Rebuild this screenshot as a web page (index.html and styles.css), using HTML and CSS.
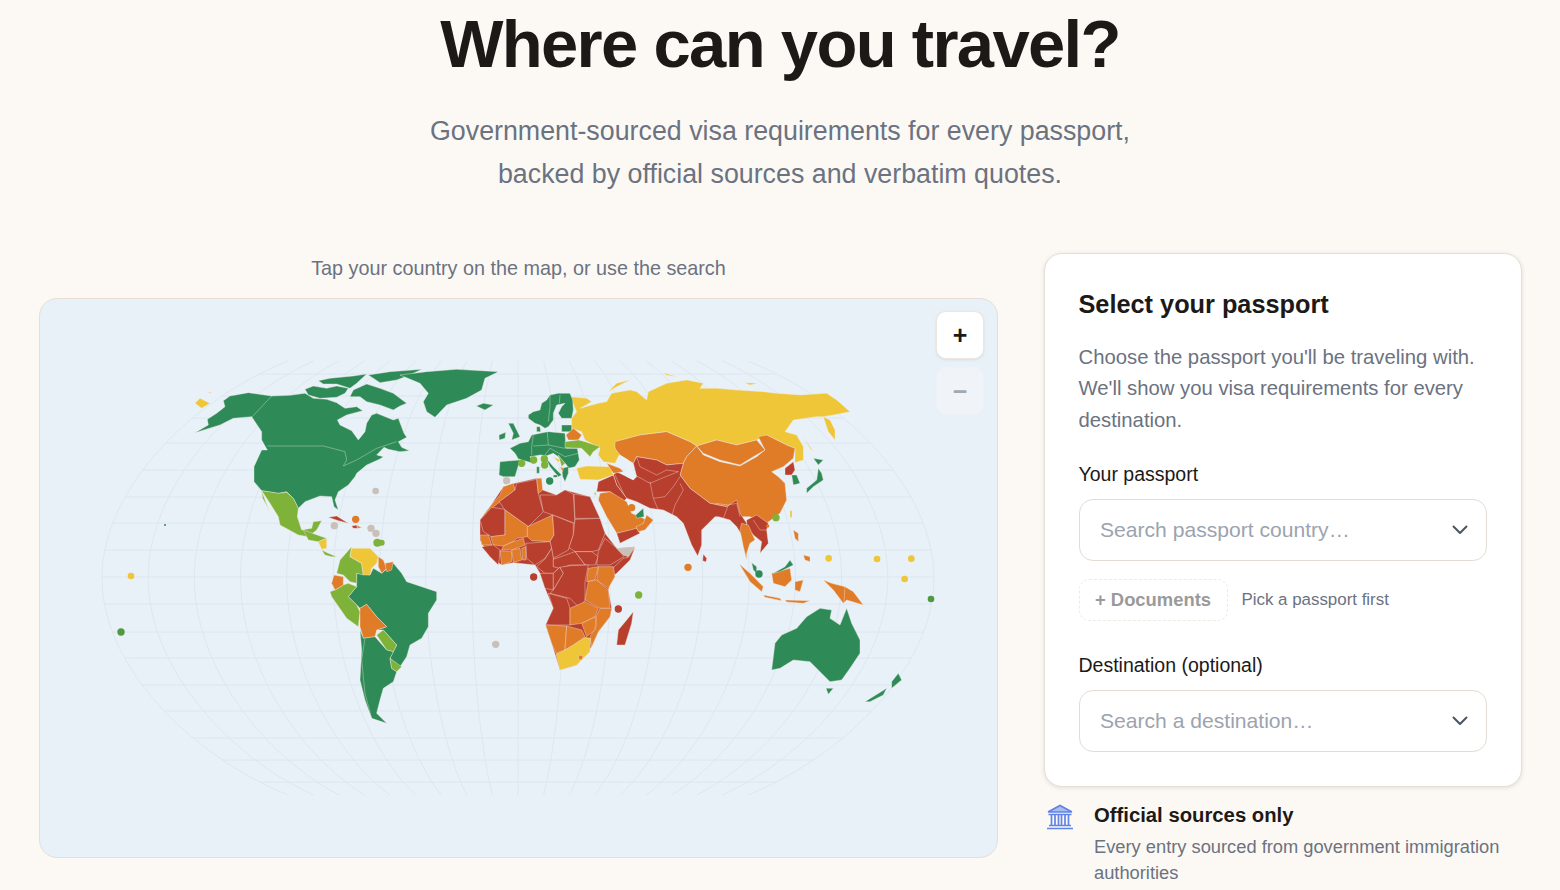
FILE: index.html
```html
<!DOCTYPE html>
<html lang="en">
<head>
<meta charset="utf-8">
<title>Where can you travel?</title>
<link rel="stylesheet" href="styles.css">
</head>
<body>
<header class="hero">
  <h1>Where can you travel?</h1>
  <p>Government-sourced visa requirements for every passport,<br>backed by official sources and verbatim quotes.</p>
</header>
<main class="layout">
  <section class="map-col">
    <div class="caption">Tap your country on the map, or use the search</div>
    <div class="map">
      <svg class="world" viewBox="39 298 959 560" aria-hidden="true">
        <defs>
          <path id="m" class="mer" d="M-230 361C-328 400-416 490-416 578C-416 666-328 755-230 795"/>
          <clipPath id="globe"><path d="M288 361H748C846 400 934 490 934 578C934 666 846 755 748 795H288C190 755 102 666 102 578C102 490 190 400 288 361Z"/></clipPath>
        </defs>
        <g class="grat" transform="translate(518 0)">
          <use href="#m" transform="scale(.111 1)"/><use href="#m" transform="scale(.222 1)"/><use href="#m" transform="scale(.333 1)"/><use href="#m" transform="scale(.444 1)"/><use href="#m" transform="scale(.556 1)"/><use href="#m" transform="scale(.667 1)"/><use href="#m" transform="scale(.778 1)"/><use href="#m" transform="scale(.889 1)"/><use href="#m" transform="scale(1 1)"/>
          <use href="#m" transform="scale(-.111 1)"/><use href="#m" transform="scale(-.222 1)"/><use href="#m" transform="scale(-.333 1)"/><use href="#m" transform="scale(-.444 1)"/><use href="#m" transform="scale(-.556 1)"/><use href="#m" transform="scale(-.667 1)"/><use href="#m" transform="scale(-.778 1)"/><use href="#m" transform="scale(-.889 1)"/><use href="#m" transform="scale(-1 1)"/>
          <path class="mer" d="M0 361V795"/>
        </g>
        <g class="grat" clip-path="url(#globe)">
          <path class="mer" d="M100 374H936M100 396H936M100 418H936M100 443H936M100 470H936M100 497H936M100 523H936M100 550H936M100 577H936M100 604H936M100 632H936M100 658H936M100 685H936M100 711H936M100 738H936M100 760H936M100 782H936"/>
        </g>

        <g class="land" transform="translate(180 360) scale(.33333)">
          <polygon class="g" points="45,218 85,195 82,178 110,160 135,140 130,122 150,108 205,98 275,108 330,106 375,100 400,115 440,118 470,128 495,145 530,140 548,152 500,165 472,180 480,195 515,212 535,240 555,215 560,190 575,165 590,160 640,180 655,175 672,220 680,232 655,245 665,262 688,272 660,275 625,268 612,262 590,285 610,290 600,297 560,315 530,340 525,350 505,375 475,395 465,420 475,450 462,440 455,410 420,408 375,425 355,445 340,415 320,395 295,400 245,392 222,365 222,320 245,270 262,270 245,240 245,215 215,170 160,175 120,195"/>
          <polyline class="b" points="275,108 215,172"/>
          <polyline class="b" points="262,258 430,258 495,275 500,300 490,318 530,300 590,265 650,245"/>
          <polygon class="g" points="375,88 400,78 440,85 470,78 505,85 495,100 470,112 420,115 385,105"/>
          <polygon class="g" points="415,62 450,55 520,48 560,42 530,70 510,85 470,72 430,72"/>
          <polygon class="g" points="520,90 560,72 600,85 640,100 680,130 660,138 640,150 600,135 560,125 540,110 510,110"/>
          <polygon class="g" points="565,45 630,35 725,28 690,45 650,60 600,68"/>
          <polygon class="g" points="660,45 740,35 830,28 955,35 915,55 905,90 860,115 800,135 765,172 740,155 730,125 745,100 720,70"/>
          <polygon class="g" points="889,138 910,130 940,135 915,150"/>
          <polygon class="y" points="45,130 60,115 90,130 65,145"/>
          <polygon class="y" points="84,97 94,96 90,100"/>
          <polygon class="l" points="245,392 265,395 295,400 320,397 340,415 355,445 352,470 365,510 395,505 400,485 425,482 410,510 385,530 355,525 300,495 295,470 270,430"/>
          <polygon class="l" points="245,392 255,420 272,465 262,440 248,415"/>
          <polygon class="l" points="370,510 420,528 440,535 415,545 385,540"/>
          <polygon class="y" points="415,545 440,535 440,565 425,568"/>
          <polygon class="l" points="425,570 445,580 470,590 455,590 435,585"/>
          <polygon class="r" points="445,472 470,468 505,490 475,482"/>
          <polygon class="r" points="515,498 530,495 533,505 520,505"/>
          <polygon class="o" points="530,495 545,503 533,505"/>
          <polygon class="g" points="530,640 570,645 580,625 605,640 640,610 665,640 680,665 770,695 770,720 745,760 745,800 725,835 690,855 680,890 660,920 630,895 650,855 610,810 590,810 620,800 590,770 560,733 540,745 530,735 505,710 530,680 530,670"/>
          <polygon class="l" points="470,640 480,600 515,560 510,590 545,610 550,645 530,640 530,670 510,665 490,645"/>
          <polygon class="y" points="515,565 570,565 595,590 590,610 575,625 570,645 550,645 545,610 510,590"/>
          <polygon class="o" points="595,590 610,600 620,625 605,640 595,620"/>
          <polygon class="o" points="615,610 640,605 635,630 620,635"/>
          <polygon class="l" points="465,690 490,675 505,670 530,680 505,710 530,735 540,755 535,800 500,775 455,710 450,695"/>
          <polygon class="o" points="462,645 490,650 490,675 465,690 455,670"/>
          <polygon class="o" points="540,745 560,733 590,770 620,800 590,810 585,830 550,835 540,800"/>
          <polygon class="l" points="590,825 610,810 650,855 640,875 620,870"/>
          <polygon class="g" points="540,810 550,835 585,830 620,870 640,875 630,895 635,925 650,935 640,965 610,985 600,1020 590,1060 620,1090 575,1075 555,1020 540,960 545,870"/>
          <polygon class="l" points="630,895 665,920 650,935 635,925"/>
          <polyline class="b" points="555,835 545,900 555,1000 575,1075"/>
          <circle class="n" cx="587" cy="393" r="10"/><circle class="o" cx="527" cy="478" r="11"/><circle class="n" cx="463" cy="497" r="11"/><circle class="n" cx="573" cy="505" r="11"/><circle class="n" cx="588" cy="520" r="11"/><circle class="l" cx="605" cy="548" r="9"/><circle class="l" cx="592" cy="548" r="12"/>
        </g>

        <g class="land" transform="translate(470 360) scale(.33333)">
          <polygon class="y" points="300,110 350,115 365,125 330,145 385,130 410,125 425,100 480,90 500,95 530,120 535,95 590,70 650,60 700,70 690,85 740,85 800,90 880,95 920,100 990,105 1070,100 1100,120 1140,155 1090,165 1060,170 1080,180 1095,210 1095,240 1075,215 1060,170 1040,170 970,180 945,215 980,225 1000,260 1000,300 975,308 975,265 950,255 890,225 860,240 800,255 740,240 680,258 660,245 590,215 510,225 440,245 435,265 450,280 435,310 400,305 385,285 390,265 345,240 335,215 305,205 305,175 320,155"/>
          <polygon class="y" points="415,95 440,70 480,60 440,80"/>
          <polygon class="y" points="580,38 620,50 590,46"/>
          <polygon class="y" points="825,68 862,70 840,75"/>
          <polygon class="y" points="1000,230 1030,275 1020,265"/>
          <polygon class="o" points="435,245 510,225 590,215 660,245 680,258 650,290 640,310 590,315 560,300 500,290 490,310 450,285 435,265"/>
          <polygon class="o" points="680,258 700,285 750,305 810,318 860,290 885,270 865,230 890,225 950,255 975,265 970,295 940,320 905,335 925,350 945,370 950,420 930,460 890,490 840,470 810,470 770,440 720,430 660,385 630,345 640,310 650,290"/>
          <polygon class="o" points="680,258 740,240 800,255 860,240 885,270 850,290 810,315 750,300 700,280"/>
          <polygon class="r" points="945,325 970,305 975,330 965,345 945,345"/>
          <polygon class="g" points="965,345 980,345 990,370 970,375"/>
          <polygon class="g" points="1010,385 1040,360 1045,325 1055,340 1060,360 1030,380 1010,400"/>
          <polygon class="g" points="1030,295 1060,300 1045,315"/>
          <polygon class="r" points="430,345 440,335 490,360 500,350 490,310 500,290 560,300 590,315 640,310 630,345 660,385 720,430 770,440 800,420 810,460 830,490 815,525 800,500 780,480 745,470 735,470 695,510 695,555 683,588 665,555 640,490 620,470 580,450 540,445 500,425 470,415 440,375"/>
          <polygon class="sea" points="450,285 475,300 490,340 490,360 470,350 465,320 445,300"/>
          <polyline class="b" points="540,365 550,415 565,450"/>
          <polyline class="b" points="540,370 575,355 625,335"/>
          <polyline class="b" points="550,415 585,410 610,380 630,350"/>
          <polyline class="b" points="630,370 640,390 615,435 605,470 635,485"/>
          <polyline class="b" points="495,345 540,370"/>
          <polyline class="b" points="500,290 510,320 560,345 590,330 625,335"/>
          <polyline class="b" points="735,430 775,435 760,475"/>
          <polyline class="b" points="775,435 800,430 810,470"/>
          <polyline class="b" points="435,345 465,410"/>
          <polygon class="r" points="830,480 860,465 895,490 890,510 895,550 870,580 875,545 850,525 830,500"/>
          <polyline class="b" points="850,480 870,510 890,510"/>
          <polygon class="o" points="815,490 835,495 855,540 840,550 830,580 830,600 820,560 810,510"/>
          <polygon class="r" points="700,582 710,595 708,606 698,602"/>
          <polygon class="r" points="380,395 385,365 430,345 440,375 470,415 460,425 420,395"/>
          <polygon class="o" points="390,400 420,395 470,425 485,460 510,470 530,480 505,505 440,520 410,470 385,420"/>
          <polygon class="r" points="440,520 500,505 510,520 450,550"/>
          <polygon class="o" points="530,465 550,480 525,510 505,515 498,500 520,490"/>
          <polygon class="g" points="497,465 520,445 522,470 500,475"/>
          <polygon class="y" points="320,325 350,318 420,320 430,345 385,360 330,358"/>
          <polygon class="o" points="410,310 450,325 460,335 430,340"/>

          <polygon class="g" points="175,165 190,155 210,150 215,130 230,120 240,105 265,100 300,100 308,120 310,150 305,175 275,175 265,160 275,140 285,130 260,135 250,160 250,180 235,200 225,205 210,195 195,190 175,175"/>
          <polyline class="b" points="240,105 240,140 235,185"/>
          <polyline class="b" points="270,105 268,130"/>
          <polygon class="g" points="275,195 305,195 305,215 275,215"/>
          <polygon class="g" points="115,190 130,190 150,230 125,240 130,220"/>
          <polygon class="g" points="87,225 107,217 105,235 88,240"/>
          <polygon class="g" points="200,200 210,200 212,215 200,215"/>
          <polygon class="g" points="120,265 150,250 175,245 185,225 225,217 235,215 285,220 288,265 322,265 328,300 315,320 295,325 290,315 275,300 265,290 250,280 230,287 210,285 180,290 190,310 145,297 135,280"/>
          <polyline class="b" points="190,225 185,260 185,285"/>
          <polyline class="b" points="232,217 235,255"/>
          <polyline class="b" points="190,258 235,255 285,265"/>
          <polyline class="b" points="225,285 240,265 285,290 325,280"/>
          <polygon class="g" points="90,305 150,300 135,350 100,350 87,345"/>
          <polygon class="g" points="225,290 250,320 275,345 265,350 240,320"/>
          <polygon class="g" points="200,320 208,320 208,340 200,340"/>
          <polygon class="g" points="250,345 262,345 262,352 250,352"/>
          <polygon class="g" points="275,325 295,320 295,340 285,365 278,350"/>
          <polygon class="y" points="250,290 270,300 265,307"/>
          <polygon class="l" points="265,285 285,310 275,320"/>
          <polygon class="o" points="270,320 280,325 278,335"/>
          <polygon class="o" points="288,225 310,205 335,225 325,240 295,240"/>
          <polygon class="l" points="285,245 325,240 345,245 390,260 370,275 360,290 335,265 285,263"/>
          <circle class="l" cx="155" cy="310" r="11"/><circle class="l" cx="191" cy="300" r="11"/><circle class="l" cx="223" cy="297" r="11"/><circle class="l" cx="224" cy="315" r="11"/><circle class="g" cx="239" cy="363" r="11"/><circle class="n" cx="110" cy="362" r="11"/>

          <polygon class="r" points="30,480 60,440 100,380 140,368 200,355 218,390 260,405 285,390 360,410 405,520 440,565 495,560 480,600 428,650 415,690 425,745 420,770 385,815 365,860 320,915 270,930 245,850 227,795 250,745 225,685 210,640 195,615 130,608 95,615 60,590 30,540"/>
          <polygon class="o" points="30,480 60,440 90,405 100,380 130,370 135,390 90,425 65,445 60,470"/>
          <polygon class="r" points="30,480 65,442 105,448 105,525 65,530 40,515"/>
          <polygon class="r" points="88,425 135,390 140,370 200,358 205,400 210,420 220,455 175,500 105,450"/>
          <polygon class="o" points="200,355 215,355 218,390 205,400"/>
          <polygon class="r" points="210,405 260,405 285,390 310,402 315,490 248,465 220,455"/>
          <polygon class="r" points="312,402 360,410 390,475 315,475"/>
          <polygon class="l" points="372,398 378,398 376,408"/>
          <polygon class="o" points="105,450 175,500 172,530 140,535 130,545 100,558 70,555 62,530 105,525"/>
          <polygon class="o" points="172,500 248,465 252,525 240,545 185,542 172,530"/>
          <polygon class="r" points="248,465 310,490 310,525 295,570 250,595 240,545 252,525"/>
          <polygon class="r" points="315,478 390,475 405,520 385,570 365,575 315,575 297,562 310,525"/>
          <polygon class="r" points="315,575 365,575 385,590 375,615 345,615"/>
          <polygon class="r" points="405,535 440,565 462,590 420,615 380,615 385,575"/>
          <polygon class="n" points="440,565 495,560 475,590 460,585"/>
          <polygon class="r" points="495,562 480,600 440,640 428,648 428,625 460,595 475,592"/>
          <polygon class="o" points="30,525 55,525 65,555 35,555"/>
          <polygon class="r" points="35,560 70,555 90,570 88,595 85,615 60,590"/>
          <polygon class="o" points="90,572 125,575 125,605 95,615"/>
          <polygon class="o" points="125,570 150,565 155,600 130,608"/>
          <polygon class="o" points="100,558 130,545 160,535 165,555 125,570 95,570"/>
          <polygon class="o" points="155,565 168,560 168,600 158,600"/>
          <polygon class="r" points="168,550 240,545 245,565 225,595 195,615 170,595"/>
          <polygon class="r" points="245,565 250,595 250,620 270,620 250,640 225,640 200,620 225,597"/>
          <polygon class="r" points="250,598 315,575 345,615 300,615 270,625 250,620"/>
          <polygon class="r" points="210,640 250,640 250,690 225,685"/>
          <polygon class="r" points="250,640 270,622 280,640 250,690"/>
          <polygon class="r" points="270,622 300,617 355,615 345,665 345,720 330,745 300,715 240,700 250,690 280,640"/>
          <polygon class="r" points="235,700 290,715 300,745 300,795 227,795 250,745"/>
          <polygon class="o" points="385,620 430,620 435,650 415,685 380,660"/>
          <polygon class="o" points="355,625 385,620 375,660 350,665"/>
          <polygon class="o" points="355,665 380,660 415,690 420,745 390,745 345,720"/>
          <polygon class="o" points="345,725 385,745 375,770 335,790 300,795 300,745"/>
          <polygon class="o" points="390,745 425,745 420,770 385,815 365,860 360,830 378,800 378,770"/>
          <polygon class="o" points="227,795 290,798 285,870 258,880 245,850"/>
          <polygon class="o" points="290,798 335,810 345,830 310,855 285,870"/>
          <polygon class="o" points="335,790 378,770 375,810 350,830"/>
          <polygon class="y" points="258,882 285,870 310,855 345,832 362,835 360,875 320,915 270,930"/>
          <polygon class="o" points="327,885 340,888 335,900 325,897"/>
          <polygon class="r" points="490,755 485,790 465,855 440,855 445,810 470,780"/>
          <circle class="o" cx="485" cy="443" r="11"/><circle class="r" cx="191" cy="651" r="11"/><circle class="l" cx="506" cy="705" r="11"/><circle class="r" cx="445" cy="747" r="11"/><circle class="o" cx="654" cy="622" r="11"/><circle class="n" cx="77" cy="853" r="11"/>

          <polygon class="g" points="845,608 860,620 860,640 850,630"/>
          <circle class="g" cx="867" cy="642" r="11"/>
          <polygon class="o" points="905,640 960,625 965,660 945,680 910,670"/>
          <polygon class="g" points="910,640 945,620 960,600 970,615 930,635"/>
          <polygon class="o" points="808,612 840,640 880,680 875,695 840,665"/>
          <polygon class="o" points="880,705 930,715 935,722 885,712"/>
          <polygon class="o" points="945,720 1020,722 1000,730 950,726"/>
          <polygon class="o" points="975,665 1000,660 990,695 975,690"/>
          <polygon class="o" points="970,510 985,520 985,545 975,535"/>
          <polygon class="o" points="1000,585 1020,590 1020,605 1005,600"/>
          <polygon class="y" points="960,452 966,452 966,472 960,472"/>
          <circle class="o" cx="893" cy="498" r="5"/><circle class="l" cx="918" cy="473" r="11"/>
          <polygon class="o" points="1060,660 1085,670 1125,680 1150,695 1180,735 1130,720 1120,730 1090,690"/>
          <polyline class="b" points="1125,680 1122,728"/>
          <circle class="y" cx="1076" cy="595" r="10"/><circle class="y" cx="1221" cy="597" r="10"/><circle class="y" cx="1324" cy="596" r="10"/><circle class="y" cx="1304" cy="657" r="10"/><circle class="gi" cx="1383" cy="717" r="10"/>
          <polygon class="g" points="905,930 915,850 935,825 980,805 1010,770 1050,745 1085,750 1080,775 1110,795 1130,745 1145,790 1170,840 1170,880 1140,925 1115,960 1080,965 1050,935 1020,905 970,900 930,925"/>
          <polygon class="g" points="1068,985 1090,985 1075,1003"/>
          <polygon class="g" points="1185,1025 1250,985 1240,1005 1200,1025"/>
          <polygon class="g" points="1265,965 1285,940 1295,960 1265,985"/>
          <circle class="y" cx="-1017" cy="648" r="10"/><circle class="gi" cx="-1047" cy="816" r="11"/><circle class="g" cx="-915" cy="495" r="3"/>
        </g>
      </svg>
      <div class="zoom">
        <button class="zoom-btn" type="button">+</button>
        <button class="zoom-btn off" type="button">−</button>
      </div>
    </div>
  </section>
  <aside class="side">
    <div class="card">
      <h2>Select your passport</h2>
      <p class="lead">Choose the passport you'll be traveling with. We'll show you visa requirements for every destination.</p>
      <div class="label">Your passport</div>
      <div class="select"><span>Search passport country…</span><svg class="chev" viewBox="0 0 16 10"><path d="M1.5 1.5L8 8l6.5-6.5"/></svg></div>
      <div class="docs"><span class="docs-btn">+ Documents</span><span class="docs-hint">Pick a passport first</span></div>
      <div class="label">Destination (optional)</div>
      <div class="select"><span>Search a destination…</span><svg class="chev" viewBox="0 0 16 10"><path d="M1.5 1.5L8 8l6.5-6.5"/></svg></div>
    </div>
    <div class="feature">
      <svg class="bank" viewBox="0 0 28 26"><path class="bank-f" d="M2 8L14 1.500 26 8Z"/><path class="bank-s" d="M2 8L14 1.500 26 8M2 8H26M2.500 10.500H25.500M5.500 10.500V21M9 10.500V21M12.500 10.500V21M15.500 10.500V21M19 10.500V21M22.500 10.500V21M3 21.500H25M1 24.500H27"/></svg>
      <div>
        <h3>Official sources only</h3>
        <p>Every entry sourced from government immigration authorities</p>
      </div>
    </div>
  </aside>
</main>
</body>
</html>
```

FILE: styles.css
```css
* { box-sizing: border-box; }
html, body { height: 890px; overflow: hidden; }
body {
  margin: 0;
  background: #fcf9f5;
  font-family: "Liberation Sans", Arial, sans-serif;
  color: #1c1917;
}
.hero { text-align: center; padding-top: 4px; height: 253px; }
.hero h1 {
  margin: 0;
  font-size: 67px;
  line-height: 80px;
  font-weight: 700;
  letter-spacing: -1.68px;
}
.hero p {
  margin: 26px 0 0;
  font-size: 26.8px;
  line-height: 43px;
  color: #6b7280;
}
.layout {
  display: grid;
  grid-template-columns: 959px 478px;
  gap: 46px;
  padding-left: 39px;
}
.caption {
  text-align: center;
  font-size: 19.8px;
  line-height: 30px;
  color: #6b7280;
}
.map {
  position: relative;
  height: 560px;
  margin-top: 15px;
  background: #e8f0f8;
  border: 1px solid #e5dfd7;
  border-radius: 18px;
  overflow: hidden;
}
.world { display: block; width: 959px; height: 560px; margin: -1px; }
.mer { fill: none; stroke: #dbe5ec; stroke-width: .8; vector-effect: non-scaling-stroke; }
.land polygon { stroke: #f3eee6; stroke-width: 1.2; stroke-linejoin: round; }
.land polygon.sea { fill: #e8f0f8; stroke: none; }
.b { fill: none; stroke: #f3eee6; stroke-width: 1.4; opacity: .8; }
.g { fill: #2e8b57; }
.gi { fill: #4f9a3f; }
.l { fill: #7fb239; }
.y { fill: #eec638; }
.o { fill: #e07b28; }
.r { fill: #b83e2e; }
.n { fill: #c9c1b9; }
.zoom {
  position: absolute;
  top: 12px;
  right: 13px;
  display: flex;
  flex-direction: column;
  gap: 8px;
}
.zoom-btn {
  width: 48px;
  height: 48px;
  padding: 0;
  background: #fff;
  border: 1px solid #ece6de;
  border-radius: 10px;
  box-shadow: 0 1px 3px rgba(0,0,0,.08);
  font: 700 25px/1 "Liberation Sans", Arial, sans-serif;
  color: #1c1917;
}
.zoom-btn.off { background: #f0f4f9; color: #a3a8af; border-color: #eef2f7; box-shadow: none; }
.card {
  background: #fff;
  border: 1px solid #e6dfd6;
  border-radius: 18px;
  box-shadow: 0 1px 4px rgba(60,40,20,.14);
  padding: 33px 34px 33px 33.5px;
  height: 534px;
}
.card h2 { margin: 0; font-size: 25.3px; line-height: 34px; font-weight: 700; }
.lead {
  margin: 21px 0 0;
  font-size: 20.3px;
  line-height: 31.3px;
  color: #6b7280;
}
.label { margin-top: 24px; font-size: 19.5px; line-height: 28px; }
.select {
  display: flex;
  align-items: center;
  justify-content: space-between;
  height: 62px;
  margin-top: 11px;
  padding: 0 18px 0 20.5px;
  border: 1px solid #e2dcd4;
  border-radius: 14px;
  font-size: 21.1px;
  color: #9ca3af;
}
.chev { width: 16px; height: 10px; fill: none; stroke: #4b5563; stroke-width: 2; stroke-linecap: round; stroke-linejoin: round; }
.docs { display: flex; align-items: center; gap: 14px; margin: 18px 0 30px; }
.docs-btn {
  display: block;
  width: 149px;
  height: 42px;
  border: 1px dashed #efeae3;
  border-radius: 10px;
  font-size: 18.4px;
  line-height: 40px;
  font-weight: 700;
  text-align: center;
  color: #9a9a9a;
}
.docs-hint { font-size: 16.9px; color: #6b7280; }
.feature { display: flex; gap: 20px; padding: 14px 0 0 2px; }
.bank { flex: none; width: 28px; height: 26px; margin-top: 3px; }
.bank-f { fill: #a9bcf0; }
.bank-s { fill: none; stroke: #5f83e6; stroke-width: 1.7; }
.feature h3 { margin: 0; font-size: 20.3px; line-height: 28px; font-weight: 700; }
.feature p { margin: 5px 0 0; font-size: 18.3px; line-height: 26px; color: #6b7280; }
```
